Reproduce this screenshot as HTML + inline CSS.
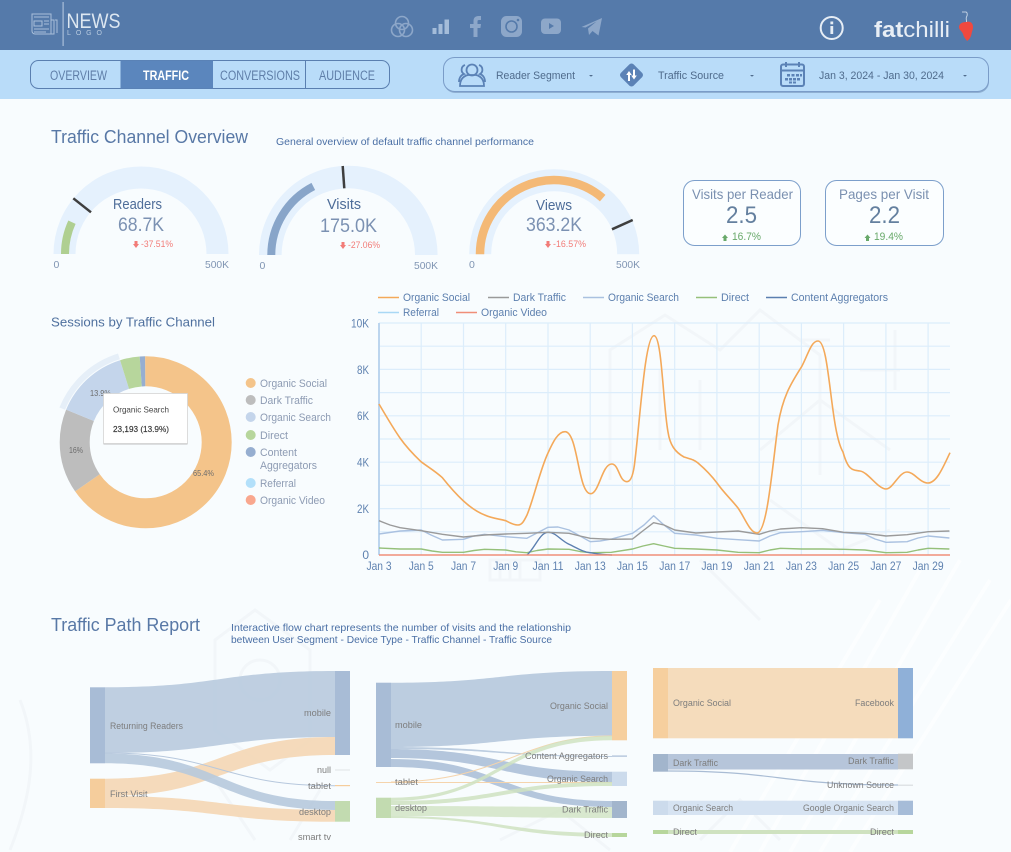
<!DOCTYPE html>
<html><head><meta charset="utf-8"><title>Traffic</title>
<style>
html,body{margin:0;padding:0;background:#f8fcfe}
svg{display:block;font-family:"Liberation Sans",sans-serif;filter:blur(.3px)}
</style></head><body>
<svg width="1011" height="852" viewBox="0 0 1011 852" xmlns="http://www.w3.org/2000/svg">
<rect width="1011" height="852" fill="#f8fcfe"/>
<!-- watermark -->
<g fill="none" stroke="#f2f6f9" stroke-width="3">
<path d="M610 480V350l55-35 55 35 40-40 60 45v120M660 450V370M700 450V380M760 450l60-50 70 50M800 340h30M895 390v-60M860 370h40"/>
<path d="M700 560l60 60M770 500l70 50 50-20"/>
<path d="M490 560v20h50v-20zM500 560v20M510 560v20M520 560v20"/>
<path d="M215 640l40-30 55 40v90l-40 30-55-40zM240 680a20 20 0 1 0 40 0a20 20 0 1 0-40 0M215 780l40 60M320 790l-30 50M500 840l60-30 50 40"/>
<path d="M20 700c20 50 10 100-10 150M700 840l40-40 40 40"/>
</g>
<g stroke="#ffffff" stroke-width="4" fill="none" opacity=".55">
<path d="M760 852L920 570M790 852L960 560M820 852L990 580M850 852L1011 600M730 852L880 600"/>
</g>
<!-- header -->
<rect width="1011" height="50" fill="#557aaa"/>
<rect y="50" width="1011" height="49" fill="#b9dcf9"/>
<!-- logo -->
<g fill="none" stroke="#a9bfd9" stroke-width="1">
<path d="M32 14h19v20H35a3 3 0 0 1-3-3z"/><path d="M51 20h3v14h-6M55 20h2v13M34 17h15M34 21h8v5h-8zM44 21h5M44 24h5M34 29h15M34 32h12" />
</g>
<rect x="62.500" y="2" width="1.200" height="44" fill="#a9bfd9"/>
<text x="66.500" y="28" font-size="21" fill="#dde7f1" textLength="54" lengthAdjust="spacingAndGlyphs">NEWS</text>
<text x="67" y="35" font-size="7" fill="#b9cbe0" textLength="35">LOGO</text>
<!-- social -->
<g fill="none" stroke="#8da7c9" stroke-width="1.600">
<circle cx="402" cy="23" r="6.500"/><circle cx="398" cy="30" r="6.500"/><circle cx="406" cy="30" r="6.500"/>
</g>
<g fill="#a4bcd9"><rect x="432.500" y="28" width="4" height="6"/><rect x="438.500" y="24" width="4" height="10"/><rect x="444.500" y="19.500" width="4.500" height="14.500"/></g>
<path d="M473.500 37V28h-3.500v-4h3.500v-3c0-3.300 2-5 5-5h2.500v4h-2c-1.200 0-1.500.6-1.500 1.600V24h3.500l-.6 4h-2.900v9z" fill="#8da7c9"/>
<rect x="501" y="16" width="21" height="21" rx="5.500" fill="#8da7c9"/><circle cx="511.500" cy="26.500" r="5.500" fill="none" stroke="#557aaa" stroke-width="1.600"/><circle cx="518" cy="20" r="1.300" fill="#557aaa"/>
<rect x="541" y="18.500" width="20" height="15.500" rx="4" fill="#8da7c9"/><path d="M549 23v6l5-3z" fill="#557aaa"/>
<path d="M581.500 27l20.500-9-3.500 17.500-6-4.500-3.500 4-1-6.500 8.500-7-11 6z" fill="#8da7c9"/>
<circle cx="831.700" cy="28" r="11" fill="none" stroke="#e6edf5" stroke-width="2"/>
<rect x="830.400" y="26" width="2.800" height="8" fill="#e6edf5"/><rect x="830.400" y="21.500" width="2.800" height="2.800" fill="#e6edf5"/>
<text x="874" y="37" font-size="22" fill="#e8eef5" textLength="76" lengthAdjust="spacingAndGlyphs"><tspan font-weight="bold">fat</tspan>chilli</text>
<path d="M966 22c3-1 7 0 7 5 0 3-1 4-1.500 7-.5 3-2.500 6-4.500 7-1-2-3-3-4-7-1-3-4-4-4-7 0-3 3-5 7-5z" fill="#f0493f"/>
<path d="M962 12h4c1.500 0 1.500 4 .5 5-.8.800 0 3 0 5" fill="none" stroke="#dfe8f2" stroke-width=".8"/>
<!-- tabs -->
<rect x="30.500" y="60.500" width="359" height="28" rx="8" fill="none" stroke="#5a7fb0"/>
<rect x="120.500" y="60.500" width="92.500" height="28" fill="#5b86bd"/>
<path d="M305.500 60.500v28" stroke="#5a7fb0"/>
<g font-size="13.500" fill="#5f7ea8">
<text x="50" y="80" textLength="57" lengthAdjust="spacingAndGlyphs">OVERVIEW</text>
<text x="143" y="80" textLength="46" lengthAdjust="spacingAndGlyphs" fill="#fff" font-weight="bold">TRAFFIC</text>
<text x="220" y="80" textLength="80" lengthAdjust="spacingAndGlyphs">CONVERSIONS</text>
<text x="319" y="80" textLength="56" lengthAdjust="spacingAndGlyphs">AUDIENCE</text>
</g>
<!-- filter bar -->
<rect x="444" y="59" width="545" height="34" rx="11" fill="#7d9cc2" opacity=".7"/>
<rect x="443.500" y="57.500" width="545" height="34" rx="11" fill="#b9dcf9" stroke="#7a9cc8"/>
<g fill="none" stroke="#5b82b6" stroke-width="1.800">
<circle cx="472" cy="70" r="5.500"/><path d="M460 86c0-7 4-10 8-11h8c4 1 8 4 8 11z"/><path d="M465 65a5 5 0 0 0-1 9c-3 1-5 4-5 8M479 65a5 5 0 0 1 1 9c3 1 5 4 5 8"/>
</g>
<text x="496" y="79" font-size="11" fill="#4f6b8c" textLength="79" lengthAdjust="spacingAndGlyphs">Reader Segment</text>
<path d="M589 75h4l-2 1.800zM750 75h4l-2 1.800zM963 75h4l-2 1.800z" fill="#4f6b8c"/>
<rect x="622.500" y="66" width="18" height="18" rx="3" fill="#5b82b6" transform="rotate(45 631.500 75)"/>
<path d="M628 81v-6h-1.800l2.800-4 2.800 4H630v6zM633 69.500v6h-1.800l2.800 4 2.800-4H635v-6z" fill="#fff"/>
<text x="658" y="79" font-size="11" fill="#4f6b8c" textLength="66" lengthAdjust="spacingAndGlyphs">Traffic Source</text>
<rect x="781" y="64.500" width="23" height="21.500" rx="2" fill="none" stroke="#5b82b6" stroke-width="2"/>
<path d="M781 70.500h23M786 62v5M799 62v5" stroke="#5b82b6" stroke-width="2" fill="none"/>
<path d="M787 74h3v2.500h-3zM791.500 74h3v2.500h-3zM796 74h3v2.500h-3zM800 74h2v2.500h-2zM785 78h3v2.500h-3zM789 78h3v2.500h-3zM793 78h3v2.500h-3zM797 78h3v2.500h-3zM789 81.500h3v2h-3zM793 81.500h3v2h-3z" fill="#5b82b6"/>
<text x="819" y="79" font-size="11" fill="#4f6b8c" textLength="125" lengthAdjust="spacingAndGlyphs">Jan 3, 2024 - Jan 30, 2024</text>
<!-- headings -->
<text x="51" y="143" font-size="18" fill="#5878a6" textLength="197" lengthAdjust="spacingAndGlyphs">Traffic Channel Overview</text>
<text x="276" y="145" font-size="10.500" fill="#4a6fa5" textLength="258" lengthAdjust="spacingAndGlyphs">General overview of default traffic channel performance</text>
<text x="51" y="326.500" font-size="12.500" fill="#4f709e" textLength="164" lengthAdjust="spacingAndGlyphs">Sessions by Traffic Channel</text>
<text x="51" y="631" font-size="18" fill="#5878a6" textLength="149" lengthAdjust="spacingAndGlyphs">Traffic Path Report</text>
<text x="231" y="631" font-size="10.500" fill="#4a6fa5" textLength="340" lengthAdjust="spacingAndGlyphs">Interactive flow chart represents the number of visits and the relationship</text>
<text x="231" y="643" font-size="10.500" fill="#4a6fa5" textLength="321" lengthAdjust="spacingAndGlyphs">between User Segment - Device Type - Traffic Channel - Traffic Source</text>
<!-- gauges -->
<path d="M53.500 254A87.500 87.500 0 0 1 228.500 254H206.500A65.500 65.500 0 0 0 75.500 254Z" fill="#e5f1fd"/>
<path d="M65 254A76 76 0 0 1 71.950 222.200" fill="none" stroke="#afcf91" stroke-width="8"/>
<path d="M73.300 198.300L91 212.300" stroke="#3e3e3e" stroke-width="2.500"/>
<path d="M259 255A89.300 89.300 0 0 1 437.600 255H415A66.700 66.700 0 0 0 281.600 255Z" fill="#e5f1fd"/>
<path d="M271.300 255A77 77 0 0 1 313.300 186.400" fill="none" stroke="#88a5c9" stroke-width="8"/>
<path d="M342.700 166L344.300 188.300" stroke="#3e3e3e" stroke-width="2.500"/>
<path d="M469.200 254.300A85 85 0 0 1 639.200 254.300H617.200A63 63 0 0 0 491.200 254.300Z" fill="#e5f1fd"/>
<path d="M480 254.300A74.200 74.200 0 0 1 602.700 198.100" fill="none" stroke="#f4b976" stroke-width="8.500"/>
<path d="M632.700 220L612 229.300" stroke="#3e3e3e" stroke-width="2.500"/>
<g font-size="14.500" fill="#4e6d99">
<text x="113" y="209" textLength="49" lengthAdjust="spacingAndGlyphs">Readers</text>
<text x="327" y="209" textLength="34" lengthAdjust="spacingAndGlyphs">Visits</text>
<text x="536" y="210" textLength="36" lengthAdjust="spacingAndGlyphs">Views</text>
</g>
<g font-size="19.500" fill="#7b91b2">
<text x="118" y="231" textLength="46" lengthAdjust="spacingAndGlyphs">68.7K</text>
<text x="320" y="232" textLength="57" lengthAdjust="spacingAndGlyphs">175.0K</text>
<text x="526" y="231" textLength="56" lengthAdjust="spacingAndGlyphs">363.2K</text>
</g>
<g font-size="9.500" fill="#f27c78">
<text x="141" y="247" textLength="32" lengthAdjust="spacingAndGlyphs">-37.51%</text>
<text x="348" y="248" textLength="32" lengthAdjust="spacingAndGlyphs">-27.06%</text>
<text x="553" y="247" textLength="33" lengthAdjust="spacingAndGlyphs">-16.57%</text>
<path d="M134.500 241h3v3h1.500l-3 4-3-4h1.500zM341.500 242h3v3h1.500l-3 4-3-4h1.500zM546.500 241h3v3h1.500l-3 4-3-4h1.500z"/>
</g>
<g font-size="10.500" fill="#8095b3">
<text x="53.500" y="268">0</text><text x="205" y="268" textLength="24" lengthAdjust="spacingAndGlyphs">500K</text>
<text x="259.500" y="269">0</text><text x="414" y="269" textLength="24" lengthAdjust="spacingAndGlyphs">500K</text>
<text x="469" y="268">0</text><text x="616" y="268" textLength="24" lengthAdjust="spacingAndGlyphs">500K</text>
</g>
<!-- KPI -->
<rect x="683.500" y="180.500" width="117" height="65" rx="11" fill="#fbfeff" stroke="#7c9fcb"/>
<rect x="825.500" y="180.500" width="118" height="65" rx="11" fill="#fbfeff" stroke="#7c9fcb"/>
<g font-size="14" fill="#7a90b0">
<text x="692" y="199" textLength="101" lengthAdjust="spacingAndGlyphs">Visits per Reader</text>
<text x="839" y="199" textLength="90" lengthAdjust="spacingAndGlyphs">Pages per Visit</text>
</g>
<g font-size="24" fill="#64809f">
<text x="726" y="223" textLength="31" lengthAdjust="spacingAndGlyphs">2.5</text>
<text x="869" y="223" textLength="31" lengthAdjust="spacingAndGlyphs">2.2</text>
</g>
<g font-size="11" fill="#68a96a">
<text x="732" y="240" textLength="29" lengthAdjust="spacingAndGlyphs">16.7%</text>
<text x="874" y="240" textLength="29" lengthAdjust="spacingAndGlyphs">19.4%</text>
<path d="M725 234.500l-3 3.500h1.500v3h3v-3h1.500zM867.500 234.500l-3 3.500h1.500v3h3v-3h1.500z"/>
</g>
<!-- donut -->
<g fill="none" transform="rotate(-90 145.700 442.300)">
<circle cx="145.700" cy="442.300" r="90" stroke="#e6eff8" stroke-width="6" pathLength="100" stroke-dasharray="14.100 85.900" stroke-dashoffset="-81.200"/>
<circle cx="145.700" cy="442.300" r="71" stroke="#f4c48a" stroke-width="30" pathLength="100" stroke-dasharray="65.400 34.600"/>
<circle cx="145.700" cy="442.300" r="71" stroke="#bdbdbd" stroke-width="30" pathLength="100" stroke-dasharray="15.900 84.100" stroke-dashoffset="-65.400"/>
<circle cx="145.700" cy="442.300" r="71" stroke="#c4d5eb" stroke-width="30" pathLength="100" stroke-dasharray="14 86" stroke-dashoffset="-81.300"/>
<circle cx="145.700" cy="442.300" r="71" stroke="#b7d69c" stroke-width="30" pathLength="100" stroke-dasharray="3.700 96.300" stroke-dashoffset="-95.300"/>
<circle cx="145.700" cy="442.300" r="71" stroke="#96aed0" stroke-width="30" pathLength="100" stroke-dasharray="1 99" stroke-dashoffset="-99"/>
</g>
<g font-size="8.500" fill="#6c6c6c">
<text x="193" y="476" textLength="21" lengthAdjust="spacingAndGlyphs">65.4%</text>
<text x="69" y="453" textLength="14" lengthAdjust="spacingAndGlyphs">16%</text>
<text x="90" y="396" textLength="21" lengthAdjust="spacingAndGlyphs">13.9%</text>
</g>
<rect x="103.500" y="394.500" width="84" height="50" fill="#9a9a9a" opacity=".6"/>
<rect x="103.500" y="393.500" width="84" height="50" fill="#fff" stroke="#d4d4d4" stroke-width=".8"/>
<text x="113" y="412.500" font-size="8.500" fill="#444" textLength="56" lengthAdjust="spacingAndGlyphs">Organic Search</text>
<text x="113" y="432" font-size="8.500" fill="#333" textLength="56" lengthAdjust="spacingAndGlyphs" stroke="#333" stroke-width=".15">23,193 (13.9%)</text>
<g>
<circle cx="250.700" cy="383" r="5" fill="#f4c48a"/><circle cx="250.700" cy="400" r="5" fill="#bdbdbd"/><circle cx="250.700" cy="417" r="5" fill="#c4d5eb"/><circle cx="250.700" cy="435" r="5" fill="#b7d69c"/><circle cx="250.700" cy="452" r="5" fill="#96aed0"/><circle cx="250.700" cy="483" r="5" fill="#b3e0fa"/><circle cx="250.700" cy="500" r="5" fill="#f9a78e"/>
</g>
<g font-size="11" fill="#8d9bb3">
<text x="260" y="387" textLength="67" lengthAdjust="spacingAndGlyphs">Organic Social</text>
<text x="260" y="404" textLength="53" lengthAdjust="spacingAndGlyphs">Dark Traffic</text>
<text x="260" y="421" textLength="71" lengthAdjust="spacingAndGlyphs">Organic Search</text>
<text x="260" y="439" textLength="28" lengthAdjust="spacingAndGlyphs">Direct</text>
<text x="260" y="456" textLength="37" lengthAdjust="spacingAndGlyphs">Content</text>
<text x="260" y="469" textLength="57" lengthAdjust="spacingAndGlyphs">Aggregators</text>
<text x="260" y="487" textLength="36" lengthAdjust="spacingAndGlyphs">Referral</text>
<text x="260" y="504" textLength="65" lengthAdjust="spacingAndGlyphs">Organic Video</text>
</g>
<!-- line chart legend -->
<g stroke-width="1.500" fill="none">
<path d="M378 297.500h21" stroke="#f4a95a"/>
<path d="M488 297.500h21" stroke="#9a9a9a"/>
<path d="M583 297.500h21" stroke="#aac1e0"/>
<path d="M696 297.500h21" stroke="#95c07a"/>
<path d="M766 297.500h21" stroke="#5b7fb0"/>
<path d="M378 312.500h21" stroke="#a9d8f5"/>
<path d="M456 312.500h21" stroke="#f08e78"/>
</g>
<g font-size="11" fill="#5c7fae">
<text x="403" y="301" textLength="67" lengthAdjust="spacingAndGlyphs">Organic Social</text>
<text x="513" y="301" textLength="53" lengthAdjust="spacingAndGlyphs">Dark Traffic</text>
<text x="608" y="301" textLength="71" lengthAdjust="spacingAndGlyphs">Organic Search</text>
<text x="721" y="301" textLength="28" lengthAdjust="spacingAndGlyphs">Direct</text>
<text x="791" y="301" textLength="97" lengthAdjust="spacingAndGlyphs">Content Aggregators</text>
<text x="403" y="316" textLength="36" lengthAdjust="spacingAndGlyphs">Referral</text>
<text x="481" y="316" textLength="66" lengthAdjust="spacingAndGlyphs">Organic Video</text>
</g>
<!-- grid -->
<path d="M379 323H950M379 346.200H950M379 369.400H950M379 392.600H950M379 415.800H950M379 439H950M379 462.200H950M379 485.400H950M379 508.600H950M379 531.800H950" stroke="#dcedfb" stroke-width="1.200" fill="none"/>
<path d="M421.200 323V555M463.500 323V555M505.700 323V555M548 323V555M590.200 323V555M632.400 323V555M674.700 323V555M716.900 323V555M759.200 323V555M801.400 323V555M843.600 323V555M885.900 323V555M928.100 323V555" stroke="#dcedfb" stroke-width="1.200" fill="none"/>
<path d="M379 323V555" stroke="#bcd5ee" stroke-width="2"/>
<!-- series -->
<g fill="none" stroke-width="1.400" stroke-linejoin="round">
<polyline stroke="#95c07a" points="379,548 400.100,549 421.200,549 432,551 442.400,552.300 463.500,552.300 474,550.500 484.600,549.300 505.700,550 516,551.800 526.900,552.700 537,550.500 548,549 569.100,549.300 580,551.500 590.200,552.700 611.400,552.300 632.500,549 643,546 653.600,543.700 664,546 674.700,548.300 695.900,549 717,550 738.100,552.300 759.200,552.700 770,550 780.400,548.300 801.500,549 822.600,549 843.700,549.300 864.900,550 886,552.700 907.100,552.300 918,550 928.200,548.300 949.400,549"/>
<path stroke="#5b7fb0" d="M527 555C535 548 540 532.300 548 532.300C556 532.300 560 540 569 544.300C577 548 583 552 590 552.700C598 554 605 555 612 555"/>
<polyline stroke="#aac1e0" points="379,534 400.100,531 421.200,530 431,535 442.400,540 463.500,539.300 474,536 484.600,534.300 505.700,536.700 526.900,538.300 537,533 548,527.300 558,527 569.100,530 580,536 590.200,541.700 600,541 611.400,539 632.500,533.300 644,525 653.600,515.700 664,525 674.700,533.300 695.900,535 717,538.300 738.100,539.700 759.200,541 770,536 780.400,532.700 801.500,531.700 822.600,530.300 843.700,532.700 864.900,534.300 875,539 886,542.300 907.100,541.700 918,538 928.200,536 949.400,538"/>
<polyline stroke="#9a9a9a" points="379,520.700 390,525 400.100,527.700 421.200,530.700 442.400,534.300 463.500,537 484.600,535 505.700,534 526.900,533.300 548,532.300 569.100,533.300 580,536 590.200,538.300 611.400,539.300 632.500,539 644,530 653.600,522.700 664,525 674.700,530 695.900,533 717,532 738.100,531 759.200,534.300 770,531 780.400,529 801.500,527.700 822.600,528.700 843.700,532.300 864.900,533.300 886,536 907.100,534.700 928.200,531.700 949.400,531"/>
<path stroke="#f4a95a" stroke-width="1.600" d="M379 404C386 416 393 428 400 438C407 448 414 455 421 461.700C428 467 435 471 442.400 477.700C449 486 456 494 463.500 501C470 507 477 512 484.700 515C491 518 499 519 505.800 520.700C510 523 514 525 518 525C522 525 524 521 527 515C534 498 540 470 548 453C553 442 558 431.700 565 431.700C578 431.700 578 493.700 590.600 493.700C599 493.700 602 464 611.700 464C619 464 619 481.700 627 481.700C632 481.700 634 470 635 460C640 420 645 335.700 654 335.700C662 335.700 663 405 668 432C670 445 675 452 684 457C690 459 693 459 698 463C705 469 711 475 717 483C724 493 731 499 738 508C745 518 750 533 757 533C767 533 772 470 778 425C783 395 792 382 801.600 366.700C808 355 811 341 818 341C830 341 830 430 843 452C848 470 852 470 860 471C868 472 878 489 886 489C893 489 899 472 907 472C914 472 920 483 928 483C937 483 944 465 950 452.700"/>
<path d="M379 555H950" stroke="#f08e78" stroke-width="1.500"/>
</g>
<g font-size="12" fill="#5f82b0" text-anchor="end">
<text x="369" y="327.500" textLength="18" lengthAdjust="spacingAndGlyphs">10K</text><text x="369" y="374" textLength="12" lengthAdjust="spacingAndGlyphs">8K</text><text x="369" y="420" textLength="12" lengthAdjust="spacingAndGlyphs">6K</text><text x="369" y="466.500" textLength="12" lengthAdjust="spacingAndGlyphs">4K</text><text x="369" y="513" textLength="12" lengthAdjust="spacingAndGlyphs">2K</text><text x="369" y="559">0</text>
</g>
<g font-size="12" fill="#5f82b0" text-anchor="middle">
<text x="379" y="570" textLength="25" lengthAdjust="spacingAndGlyphs">Jan 3</text><text x="421.200" y="570" textLength="25" lengthAdjust="spacingAndGlyphs">Jan 5</text><text x="463.500" y="570" textLength="25" lengthAdjust="spacingAndGlyphs">Jan 7</text><text x="505.700" y="570" textLength="25" lengthAdjust="spacingAndGlyphs">Jan 9</text><text x="548" y="570" textLength="31" lengthAdjust="spacingAndGlyphs">Jan 11</text><text x="590.200" y="570" textLength="31" lengthAdjust="spacingAndGlyphs">Jan 13</text><text x="632.400" y="570" textLength="31" lengthAdjust="spacingAndGlyphs">Jan 15</text><text x="674.700" y="570" textLength="31" lengthAdjust="spacingAndGlyphs">Jan 17</text><text x="716.900" y="570" textLength="31" lengthAdjust="spacingAndGlyphs">Jan 19</text><text x="759.200" y="570" textLength="31" lengthAdjust="spacingAndGlyphs">Jan 21</text><text x="801.400" y="570" textLength="31" lengthAdjust="spacingAndGlyphs">Jan 23</text><text x="843.600" y="570" textLength="31" lengthAdjust="spacingAndGlyphs">Jan 25</text><text x="885.900" y="570" textLength="31" lengthAdjust="spacingAndGlyphs">Jan 27</text><text x="928.100" y="570" textLength="31" lengthAdjust="spacingAndGlyphs">Jan 29</text>
</g>
<!-- sankey 1 -->
<g opacity=".95">
<path d="M105 687.300C220 687.300 220 671 335 671V737C220 737 220 753 105 753Z" fill="#bccde0"/>
<path d="M105 778.700C220 778.700 220 737 335 737V755C220 755 220 796 105 796Z" fill="#f5d9b8"/>
<path d="M105 796C220 796 220 810 335 810V821.700C220 821.700 220 808 105 808Z" fill="#f5d9b8"/>
<path d="M105 753.500C220 753.500 220 801 335 801V810C220 810 220 763.300 105 763.300Z" fill="#b4c6dc" opacity=".9"/>
<path d="M105 753C220 753 220 785.700 335 785.700" fill="none" stroke="#b4c6dc" stroke-width="1"/>
</g>
<rect x="90" y="687.300" width="15" height="76" fill="#a8bcd6"/>
<rect x="90" y="778.700" width="15" height="29.300" fill="#f5cd9c"/>
<rect x="335" y="671" width="15" height="84" fill="#a8bcd6"/>
<rect x="335" y="769.500" width="15" height="1" fill="#dfe3e6"/>
<rect x="335" y="785" width="15" height="1.200" fill="#f5cd9c"/>
<rect x="335" y="801" width="15" height="20.700" fill="#c2dbb0"/>
<!-- sankey 2 -->
<g>
<path d="M391 682.700C500 682.700 500 671 612 671V735.700C500 735.700 500 747 391 747Z" fill="#bccde0"/>
<path d="M391 747C500 747 500 756 612 756V757C500 757 500 749 391 749Z" fill="#bccde0"/>
<path d="M391 749C500 749 500 771.700 612 771.700V782C500 782 500 758 391 758Z" fill="#b4c6dc"/>
<path d="M391 759C500 759 500 801 612 801V807C500 807 500 767 391 767Z" fill="#b4c6dc"/>
<path d="M376 782.500H612" stroke="#f5d4ac" stroke-width="1"/>
<path d="M391 782C500 782 520 736 612 736" fill="none" stroke="#f5d4ac" stroke-width="1"/>
<g opacity=".85">
<path d="M391 797.700C500 797.700 500 736 612 736V740.300C500 740.300 500 801 391 801Z" fill="#d0e3c2"/>
<path d="M391 801C500 801 500 782 612 782V786C500 786 500 805 391 805Z" fill="#d0e3c2"/>
<path d="M391 806C500 806 500 807 612 807V818C500 818 500 816 391 816Z" fill="#d3e5c6"/>
<path d="M391 816C500 816 500 833 612 833V837C500 837 500 818 391 818Z" fill="#d0e3c2"/>
</g>
</g>
<rect x="376" y="682.700" width="15" height="84.300" fill="#a8bcd6"/>
<rect x="376" y="797.700" width="15" height="20.300" fill="#c2dbb0"/>
<rect x="612" y="671" width="15" height="69.300" fill="#f6cf9e"/>
<rect x="612" y="755.500" width="15" height="1.200" fill="#a8bcd6"/>
<rect x="612" y="771.700" width="15" height="14.300" fill="#ccdbec"/>
<rect x="612" y="801" width="15" height="17" fill="#a2b5cc"/>
<rect x="612" y="833" width="15" height="4" fill="#b7d69c"/>
<!-- sankey 3 -->
<rect x="668" y="668" width="230" height="70.300" fill="#f5dcbc"/>
<rect x="668" y="754" width="230" height="15.500" fill="#b6c5da"/>
<path d="M668 771C780 771 780 785 898 785" fill="none" stroke="#a9bcd4" stroke-width="1.200"/>
<rect x="668" y="800.700" width="230" height="14.300" fill="#d6e3f2"/>
<rect x="668" y="830" width="230" height="4" fill="#cfe2c0"/>
<rect x="653" y="668" width="15" height="70.300" fill="#f6cf9e"/>
<rect x="898" y="668" width="15" height="70.300" fill="#8fb0d8"/>
<rect x="653" y="754" width="15" height="17.700" fill="#a2b5cc"/>
<rect x="898" y="753.700" width="15" height="15.600" fill="#c4c6c8"/>
<rect x="898" y="784.500" width="15" height="1.500" fill="#dfe3e6"/>
<rect x="653" y="800.700" width="15" height="14.300" fill="#ccdbec"/>
<rect x="898" y="800.700" width="15" height="14.300" fill="#a6bcd8"/>
<rect x="653" y="830" width="15" height="4" fill="#b7d69c"/>
<rect x="898" y="830" width="15" height="4" fill="#b7d69c"/>
<!-- sankey labels -->
<g font-size="9" fill="#7d7d7d">
<text x="110" y="729" textLength="73" lengthAdjust="spacingAndGlyphs">Returning Readers</text>
<text x="110" y="797" textLength="37.500" lengthAdjust="spacingAndGlyphs">First Visit</text>
<text x="304" y="716" textLength="27" lengthAdjust="spacingAndGlyphs">mobile</text>
<text x="317" y="773" textLength="14" lengthAdjust="spacingAndGlyphs">null</text>
<text x="308" y="789" textLength="23" lengthAdjust="spacingAndGlyphs">tablet</text>
<text x="299" y="815" textLength="32" lengthAdjust="spacingAndGlyphs">desktop</text>
<text x="298" y="840" textLength="33" lengthAdjust="spacingAndGlyphs">smart tv</text>
<text x="395" y="728" textLength="27" lengthAdjust="spacingAndGlyphs">mobile</text>
<text x="395" y="785" textLength="23" lengthAdjust="spacingAndGlyphs">tablet</text>
<text x="395" y="811" textLength="32" lengthAdjust="spacingAndGlyphs">desktop</text>
<text x="550" y="709" textLength="58" lengthAdjust="spacingAndGlyphs">Organic Social</text>
<text x="525" y="759" textLength="83" lengthAdjust="spacingAndGlyphs">Content Aggregators</text>
<text x="547" y="782" textLength="61" lengthAdjust="spacingAndGlyphs">Organic Search</text>
<text x="562" y="812.500" textLength="46" lengthAdjust="spacingAndGlyphs">Dark Traffic</text>
<text x="584" y="838" textLength="24" lengthAdjust="spacingAndGlyphs">Direct</text>
<text x="673" y="706" textLength="58" lengthAdjust="spacingAndGlyphs">Organic Social</text>
<text x="855" y="706" textLength="39" lengthAdjust="spacingAndGlyphs">Facebook</text>
<text x="673" y="766" textLength="45" lengthAdjust="spacingAndGlyphs">Dark Traffic</text>
<text x="848" y="764" textLength="46" lengthAdjust="spacingAndGlyphs">Dark Traffic</text>
<text x="827" y="788" textLength="67" lengthAdjust="spacingAndGlyphs">Unknown Source</text>
<text x="673" y="811" textLength="60" lengthAdjust="spacingAndGlyphs">Organic Search</text>
<text x="803" y="811" textLength="91" lengthAdjust="spacingAndGlyphs">Google Organic Search</text>
<text x="673" y="835" textLength="24" lengthAdjust="spacingAndGlyphs">Direct</text>
<text x="870" y="835" textLength="24" lengthAdjust="spacingAndGlyphs">Direct</text>
</g>
</svg>
</body></html>
